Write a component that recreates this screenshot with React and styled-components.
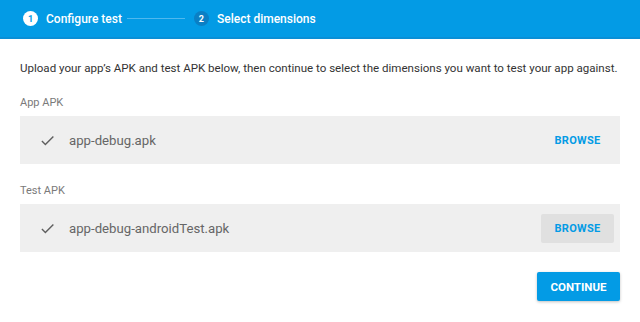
import React from 'react';
import styled, { createGlobalStyle } from 'styled-components';

const GlobalStyle = createGlobalStyle`
    body {
        margin: 0;
        background: #ffffff;
        font-family: Roboto, "Liberation Sans", sans-serif;
    }
`

function Step(props) {
    return (
        <StepItem>
            <StepCircle active={props.active}>{props.num}</StepCircle>
            <StepLabel>{props.text}</StepLabel>
        </StepItem>
    );
}

function ApkRow(props) {
    return (
        <Field>
            <FieldLabel>{props.label}</FieldLabel>
            <FileCard>
                <CheckIcon viewBox="0 0 24 24">
                    <path d="M9 16.2L4.8 12l-1.4 1.4L9 19 21 7l-1.4-1.4L9 16.2z" />
                </CheckIcon>
                <FileName>{props.file}</FileName>
                <BrowseButton hover={props.hover}>BROWSE</BrowseButton>
            </FileCard>
        </Field>
    );
}

export default function App() {
    return (
        <Page>
            <GlobalStyle />
            <Header>
                <Step num="1" text="Configure test" active />
                <StepLine />
                <Step num="2" text="Select dimensions" />
            </Header>
            <Body>
                <Intro>
                    Upload your app’s APK and test APK below, then continue to select the dimensions you want to test your app against.
                </Intro>
                <ApkRow label="App APK" file="app-debug.apk" />
                <ApkRow label="Test APK" file="app-debug-androidTest.apk" hover />
                <Footer>
                    <ContinueButton>CONTINUE</ContinueButton>
                </Footer>
            </Body>
        </Page>
    );
}

const Page = styled.div`
    width: 640px;
    height: 322px;
    overflow: hidden;
    background: #fff;
`

const Header = styled.div`
    height: 37px;
    background: #039be5;
    border-bottom: 2px solid #0a8fd6;
    display: flex;
    align-items: center;
    padding-left: 23px;
`

const StepItem = styled.div`
    display: flex;
    align-items: center;
`

const StepCircle = styled.span`
    width: 15px;
    height: 15px;
    border-radius: 50%;
    display: flex;
    align-items: center;
    justify-content: center;
    font-size: 9px;
    font-weight: 700;
    background: ${p => p.active ? '#ffffff' : '#0b7fc4'};
    color: ${p => p.active ? '#039be5' : '#ffffff'};
`

const StepLabel = styled.span`
    margin-left: 8px;
    font-size: 12px;
    font-weight: 500;
    color: #ffffff;
`

const StepLine = styled.span`
    width: 58px;
    height: 1px;
    background: #4fb8ee;
    margin: 0 9px 0 5px;
`

const Body = styled.div`
    padding: 22px 20px 0 20px;
`

const Intro = styled.p`
    margin: 0;
    font-size: 11.55px;
    line-height: 15px;
    color: #333333;
    white-space: nowrap;
`

const Field = styled.div`
    margin-top: 20px;
`

const FieldLabel = styled.div`
    font-size: 11px;
    color: #7a7a7a;
    line-height: 13px;
`

const FileCard = styled.div`
    margin-top: 7px;
    height: 48px;
    background: #efefef;
    display: flex;
    align-items: center;
    padding: 0 6px 0 19px;
`

const CheckIcon = styled.svg`
    width: 17px;
    height: 17px;
    fill: #5f5f5f;
`

const FileName = styled.span`
    margin-left: 13px;
    font-size: 13.2px;
    color: #666666;
    flex: 1;
`

const BrowseButton = styled.span`
    width: 73px;
    height: 29px;
    display: flex;
    align-items: center;
    justify-content: center;
    font-size: 11px;
    font-weight: 700;
    letter-spacing: 0.3px;
    color: #039be5;
    border-radius: 2px;
    background: ${p => p.hover ? '#e0e0e0' : 'transparent'};
`

const Footer = styled.div`
    display: flex;
    justify-content: flex-end;
    margin-top: 20px;
`

const ContinueButton = styled.span`
    width: 83px;
    height: 29px;
    display: flex;
    align-items: center;
    justify-content: center;
    background: #039be5;
    color: #ffffff;
    font-size: 11.5px;
    font-weight: 700;
    border-radius: 2px;
    box-shadow: 0 1px 3px rgba(0, 0, 0, 0.25);
`
